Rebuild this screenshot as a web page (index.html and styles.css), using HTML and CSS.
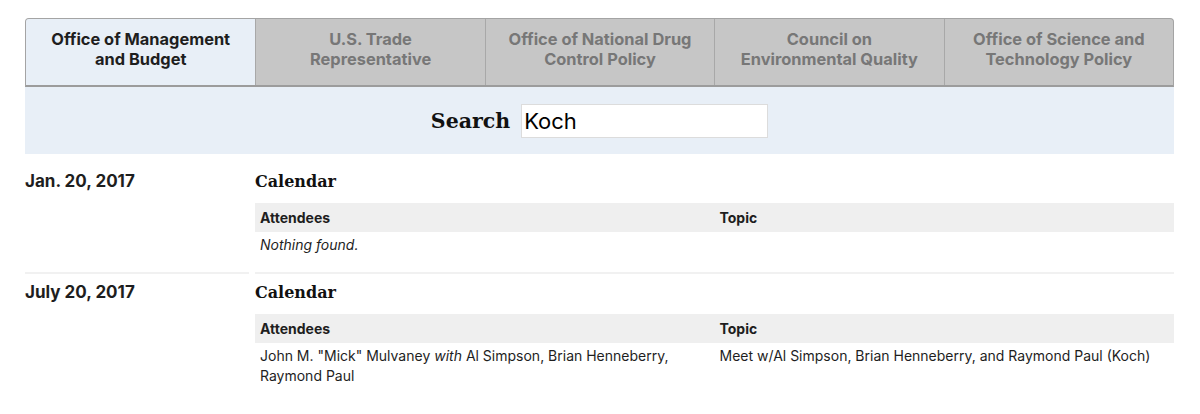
FILE: index.html
```html
<!DOCTYPE html>
<html>
<head>
<meta charset="utf-8">
<link rel="stylesheet" href="styles.css">
</head>
<body>
<div class="page">
  <div class="tabs">
    <div class="tab active">Office of Management<br>and Budget</div>
    <div class="tab">U.S. Trade<br>Representative</div>
    <div class="tab">Office of National Drug<br>Control Policy</div>
    <div class="tab">Council on<br>Environmental Quality</div>
    <div class="tab">Office of Science and<br>Technology Policy</div>
  </div>
  <div class="search">
    <label class="search-label">Search</label>
    <div class="search-input">Koch</div>
  </div>
  <div class="day first">
    <div class="date">Jan. 20, 2017</div>
    <div class="entries">
      <h2 class="cal-title">Calendar</h2>
      <div class="table">
        <div class="thead">
          <div class="cell">Attendees</div>
          <div class="cell">Topic</div>
        </div>
        <div class="trow">
          <div class="cell empty">Nothing found.</div>
        </div>
      </div>
    </div>
  </div>
  <div class="day last">
    <div class="date">July 20, 2017</div>
    <div class="entries">
      <h2 class="cal-title">Calendar</h2>
      <div class="table">
        <div class="thead">
          <div class="cell">Attendees</div>
          <div class="cell">Topic</div>
        </div>
        <div class="trow">
          <div class="cell">John M. "Mick" Mulvaney <em>with</em> Al Simpson, Brian Henneberry, Raymond Paul</div>
          <div class="cell">Meet w/Al Simpson, Brian Henneberry, and Raymond Paul (Koch)</div>
        </div>
      </div>
    </div>
  </div>
</div>
</body>
</html>
```

FILE: styles.css
```css
html, body {
  margin: 0;
  padding: 0;
  background: #fff;
}
body {
  font-family: Inter, "Liberation Sans", sans-serif;
  color: #1e1e1e;
}
.page {
  width: 1149px;
  margin: 0 0 0 25px;
  padding-top: 18px;
}
.tabs {
  display: grid;
  grid-template-columns: repeat(5, 1fr);
  border: 1px solid #a4a4a4;
  border-bottom: 2px solid #9c9c9c;
  border-radius: 4px 4px 0 0;
  overflow: hidden;
  background: #c6c6c6;
}
.tab {
  height: 66px;
  box-sizing: border-box;
  padding-top: 10px;
  text-align: center;
  font-weight: 700;
  font-size: 16.4px;
  line-height: 20px;
  color: #777;
  border-left: 1px solid #a8a8a8;
}
.tab:first-child {
  border-left: none;
}
.tab.active {
  background: #e8eff7;
  color: #1e1e1e;
}
.search {
  background: #e8eff7;
  height: 67px;
  display: flex;
  align-items: center;
  justify-content: center;
  gap: 11px;
}
.search-label {
  font-family: "DejaVu Serif", serif;
  font-weight: 700;
  font-size: 20.5px;
  color: #111;
}
.search-input {
  width: 247px;
  height: 34px;
  box-sizing: border-box;
  background: #fff;
  border: 1px solid #dcdcdc;
  font-size: 22px;
  line-height: 32px;
  padding-left: 2px;
  color: #000;
}
.day {
  display: grid;
  grid-template-columns: 224px 919px;
  column-gap: 6px;
}
.date, .entries {
  border-bottom: 2px solid #f1f1f1;
}
.day.last .date, .day.last .entries {
  border-bottom: none;
}
.date {
  font-weight: 700;
  font-size: 17px;
  line-height: 20px;
  padding-top: 8px;
}
.day.first .date {
  padding-top: 17px;
}
.cal-title {
  margin: 0;
  font-family: "DejaVu Serif", serif;
  font-weight: 700;
  font-size: 16px;
  line-height: 20px;
  padding-top: 9px;
  padding-bottom: 11px;
  color: #111;
}
.day.first .cal-title {
  padding-top: 18px;
}
.table {
  padding-bottom: 17px;
}
.thead, .trow {
  display: grid;
  grid-template-columns: 1fr 1fr;
}
.thead {
  background: #efefef;
  height: 29px;
  align-items: center;
  font-weight: 700;
  font-size: 14px;
}
.trow {
  font-size: 14px;
  line-height: 20px;
  padding-top: 3px;
}
.cell {
  padding-left: 5px;
  padding-right: 10px;
}
.empty {
  font-style: italic;
}
```
